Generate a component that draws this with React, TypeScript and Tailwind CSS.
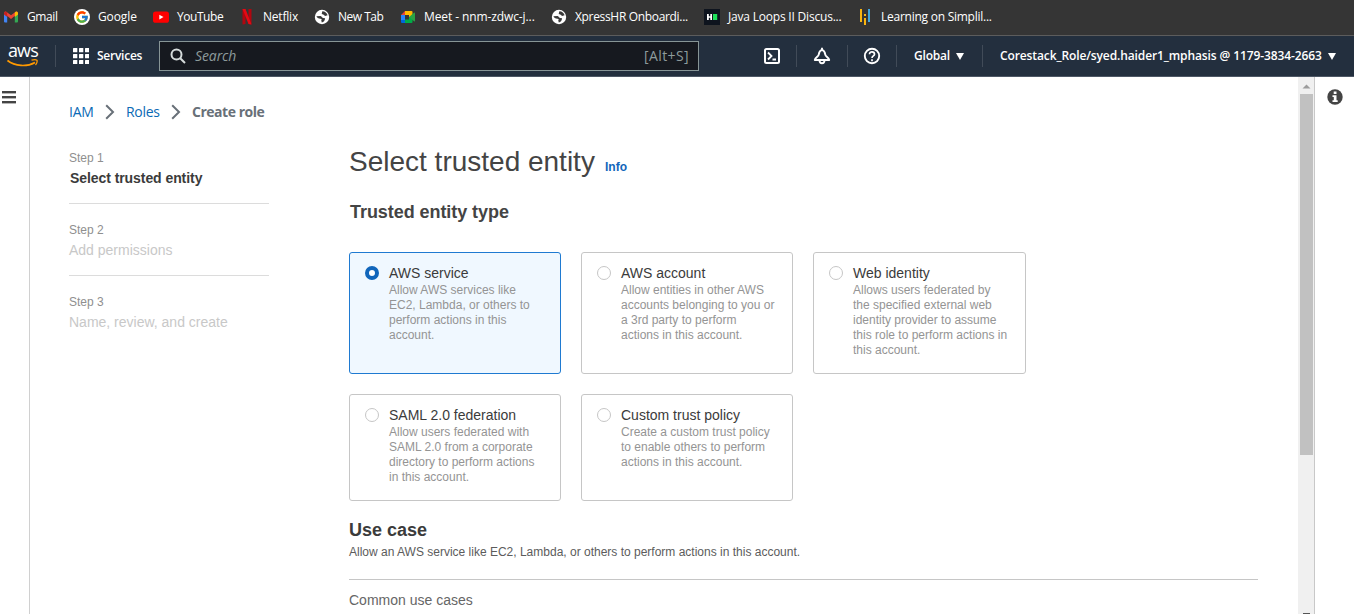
import React from "react";
import { FcGoogle } from "react-icons/fc";

const Globe = () => (
  <svg width="16" height="16" viewBox="0 0 16 16">
    <circle cx="8" cy="8" r="7.2" fill="#fff" />
    <path d="M2.4 7.2l4-.2c1.5 0 1.2 1.8 2.7 1.9l2 .3c-.3 2.5-1.500 4-3.300 4.300l-.6-2.200c.900-.500.600-1.500-.700-1.600-2.200-.200-3.500-.800-4.100-2.500z" fill="#3a3a3a" />
    <path d="M8.300 2.200c2.800.100 4.700 1.700 5.300 4.100l-2.500.700-1.800-1.500-1.600-.600z" fill="#3a3a3a" />
  </svg>
);

const Gmail = () => (
  <svg width="16" height="16" viewBox="0 0 16 16">
    <path d="M1 4v8.500q0 1 1 1h2.200V6.800z" fill="#4285f4" />
    <path d="M15 4v8.500q0 1-1 1h-2.200V6.800z" fill="#34a853" />
    <path d="M1 4.200Q1.200 2 3.300 2.700L8 6.200l4.700-3.500Q14.800 2 15 4.200L8 10z" fill="#ea4335" />
    <path d="M11.800 3.400l.9-.7Q14.800 2 15 4.200v1.300l-3.200 2.400z" fill="#fbbc04" />
    <path d="M1 4.200v1.300l3.200 2.400V3.400l-.9-.7Q1.200 2 1 4.200z" fill="#c5221f" />
  </svg>
);

const Google = () => (
  <span className="flex h-4 w-4 items-center justify-center rounded-full bg-white">
    <FcGoogle size={14} />
  </span>
);

const YouTube = () => (
  <svg width="16" height="16" viewBox="0 0 16 16">
    <rect x="0" y="2.500" width="16" height="11.300" rx="2.600" fill="#f00" />
    <path d="M6.300 5.700v4.800l4.200-2.400z" fill="#fff" />
  </svg>
);

const Netflix = () => (
  <svg width="16" height="16" viewBox="0 0 16 16">
    <path d="M3.500 0h3v15l-3 .600z" fill="#b1060f" />
    <path d="M9.500 0h3v15.600l-3-.600z" fill="#b1060f" />
    <path d="M3.500 0h3l6 15.600-3-.500z" fill="#e50914" />
  </svg>
);

const Meet = () => (
  <svg width="16" height="16" viewBox="0 0 16 16">
    <path d="M1 6l4-4v4z" fill="#ea4335" />
    <path d="M1 6h4v5H1z" fill="#2684fc" />
    <path d="M1 11h4v3H2q-1 0-1-1z" fill="#0066da" />
    <path d="M5 2h6.500q1 0 1 1v3.500L9 8.500V6H5z" fill="#ffba00" />
    <path d="M5 10.500h4V7.800l3.500 2V13q0 1-1 1H5z" fill="#00ac47" />
    <path d="M9 8l5-4.200q1-.600 1 .400v7.600q0 1-1 .400z" fill="#2aa243" />
  </svg>
);

const HackerRank = () => (
  <svg width="16" height="16" viewBox="0 0 16 16">
    <rect width="16" height="16" fill="#0e141e" />
    <path d="M3 5h1.800v2.200h1.500V5H8v6H6.300V8.700H4.800V11H3z" fill="#fff" />
    <rect x="9" y="5" width="4.200" height="6" fill="#1ee05b" />
  </svg>
);

const Simplilearn = () => (
  <svg width="16" height="16" viewBox="0 0 16 16">
    <rect x="3" y="0" width="2" height="13" fill="#f8b511" />
    <rect x="7" y="5" width="2" height="2" fill="#f8b511" />
    <rect x="7" y="9" width="2" height="7" fill="#f8b511" />
    <rect x="11" y="0" width="2" height="13" fill="#3ea6de" />
  </svg>
);

const bookmarks = [
  { label: "Gmail", icon: <Gmail />, cls: "w-[71px]", text: "tracking-[-0.4px]" },
  { label: "Google", icon: <Google />, cls: "w-[79px]", text: "tracking-[-0.1px]" },
  { label: "YouTube", icon: <YouTube />, cls: "w-[86px]", text: "tracking-[-0.45px]" },
  { label: "Netflix", icon: <Netflix />, cls: "w-[75px]", text: "tracking-[-0.2px]" },
  { label: "New Tab", icon: <Globe />, cls: "w-[86px]", text: "tracking-[-0.5px]" },
  { label: "Meet - nnm-zdwc-j...", icon: <Meet />, cls: "w-[151px]", text: "tracking-[-0.1px]" },
  { label: "XpressHR Onboardi...", icon: <Globe />, cls: "w-[153px]", text: "tracking-[-0.33px]" },
  { label: "Java Loops II Discus...", icon: <HackerRank />, cls: "w-[153px]", text: "tracking-[-0.2px]" },
  { label: "Learning on Simplil...", icon: <Simplilearn />, cls: "w-[150px]", text: "tracking-[-0.25px]" },
];

const steps = [
  { n: "Step 1", label: "Select trusted entity", cls: "font-bold text-[#3b3b3b] pl-px tracking-[-0.07px]" },
  { n: "Step 2", label: "Add permissions", cls: "text-[#c8c8c8]" },
  { n: "Step 3", label: "Name, review, and create", cls: "text-[#c8c8c8]" },
];

const entities = [
  { title: "AWS service", lines: ["Allow AWS services like", "EC2, Lambda, or others to", "perform actions in this", "account."], on: true },
  { title: "AWS account", lines: ["Allow entities in other AWS", "accounts belonging to you or", "a 3rd party to perform", "actions in this account."] },
  { title: "Web identity", lines: ["Allows users federated by", "the specified external web", "identity provider to assume", "this role to perform actions in", "this account."] },
  { title: "SAML 2.0 federation", lines: ["Allow users federated with", "SAML 2.0 from a corporate", "directory to perform actions", "in this account."] },
  { title: "Custom trust policy", lines: ["Create a custom trust policy", "to enable others to perform", "actions in this account."] },
];

const Divider = () => <span className="h-[22px] w-px shrink-0 bg-[#414b58]" />;
const Caret = () => (
  <svg width="8" height="7" viewBox="0 0 8 7" className="shrink-0">
    <path d="M0 0h8L4 7z" fill="#fff" />
  </svg>
);
const Chevron = () => (
  <svg width="10" height="16" viewBox="0 0 10 16" fill="none" stroke="#687078" strokeWidth="2" className="shrink-0">
    <path d="M1.200 1.200L8 8l-6.800 6.800" />
  </svg>
);

function BookmarkBar() {
  return (
    <div className="flex h-9 shrink-0 items-center border-b border-[#5c5c5c] bg-[#353535] pb-[2px] pl-[3px] font-['Open_Sans',sans-serif] text-[12px] text-white">
      {bookmarks.map((b) => (
        <div key={b.label} className={`flex shrink-0 items-center gap-2 ${b.cls}`}>
          {b.icon}
          <span className={`whitespace-nowrap ${b.text}`}>{b.label}</span>
        </div>
      ))}
    </div>
  );
}

function NavBar() {
  return (
    <div className="flex h-[41px] shrink-0 items-center border-b border-[#4d5765] bg-[#232f3e] font-['Open_Sans',sans-serif] text-[12px] font-semibold text-white">
      <div className="flex w-[55px] flex-col items-start pb-[2px] pl-[7px]">
        <span className="h-[16px] pl-px text-[18px] leading-[14px] font-medium tracking-[-0.9px]">aws</span>
        <svg width="32" height="8" viewBox="0 0 32 8" fill="none" stroke="#f90" strokeWidth="1.700">
          <path d="M.500 1.500C8 7.600 20 8 28 3.400" />
          <path d="M24.500 1.200c2.500-.700 4.500-.600 5.500 0 .400 1.500-.200 3.300-1.500 4.800" strokeWidth="1.300" />
        </svg>
      </div>
      <Divider />
      <svg width="16" height="16" viewBox="0 0 16 16" className="ml-[17px]" fill="#fff">
        {[0, 6, 12].map((y) => [0, 6, 12].map((x) => <rect key={`${x}-${y}`} x={x} y={y} width="4.300" height="4.300" rx=".500" />))}
      </svg>
      <span className="ml-2 w-[62px] tracking-[-0.25px]">Services</span>
      <div className="flex h-[30px] w-[540px] items-center border border-[#879596] bg-[#16191f] px-[9px] text-[14px] font-normal text-[#8d9b9c]">
        <svg width="18" height="18" viewBox="0 0 18 18" fill="none" stroke="#d5dbdb" strokeWidth="2">
          <circle cx="7.500" cy="7.500" r="5" />
          <path d="M11.200 11.200l4.800 4.800" />
        </svg>
        <span className="ml-2 grow pb-[2px] tracking-[-0.1px] italic">Search</span>
        <span className="pb-[2px] tracking-[0.4px]">[Alt+S]</span>
      </div>
      <svg width="18" height="18" viewBox="0 0 18 18" fill="none" stroke="#fff" strokeWidth="2" className="ml-[64px]">
        <rect x="2" y="2" width="14" height="14" rx="1.500" />
        <path d="M5 5.500L8.500 9 5 12.500M9.500 12.500H13" strokeWidth="1.800" />
      </svg>
      <span className="w-[15px]" />
      <Divider />
      <svg width="18" height="18" viewBox="0 0 18 18" fill="none" stroke="#fff" strokeWidth="1.900" className="ml-4" strokeLinejoin="round">
        <path d="M9 2.800C6.800 3.500 6 5 5.800 7.300c-.200 2.200-3.500 3.200-4 5.700h14.400c-.500-2.500-3.800-3.500-4-5.700C12 5 11.200 3.500 9 2.800z" />
        <path d="M6.500 13.500c.200 3.700 4.800 3.700 5 0" />
        <path d="M9 .800V3" />
      </svg>
      <span className="w-4" />
      <Divider />
      <svg width="18" height="18" viewBox="0 0 18 18" fill="none" stroke="#fff" strokeWidth="1.900" className="ml-[15px]">
        <circle cx="9" cy="9" r="7.200" />
        <path d="M6.500 7.200c0-3.200 5-3 5 0C11.500 9 9 8.800 9 11M9 12.300v1.900" strokeWidth="1.700" />
      </svg>
      <span className="w-[15px]" />
      <Divider />
      <span className="ml-[17px] w-[42px] whitespace-nowrap tracking-[-0.2px]">Global</span>
      <Caret />
      <span className="w-[18px]" />
      <Divider />
      <span className="ml-[17px] w-[328px] whitespace-nowrap tracking-[-0.11px]">Corestack_Role/syed.haider1_mphasis @ 1179-3834-2663</span>
      <Caret />
    </div>
  );
}

function Sidebar() {
  return (
    <div className="w-[200px] shrink-0 pt-[6px]">
      {steps.map((s, i) => (
        <div key={s.n} className={`h-[72px] pt-[18px] ${i < 2 ? "border-b border-[#dcdcdc]" : ""}`}>
          <div className="text-[12px] leading-4 text-[#8f8f8f]">{s.n}</div>
          <div className={`mt-px text-[14px] leading-[22px] ${s.cls}`}>{s.label}</div>
        </div>
      ))}
    </div>
  );
}

function EntityCard({ e }: { e: (typeof entities)[number] }) {
  return (
    <div className={`flex rounded-[3px] border pt-3 pl-[15px] ${e.on ? "border-[#1f7ad1] bg-[#f0f8ff]" : "border-[#c6c6c6] bg-white"}`}>
      <span className={`mt-px h-[14px] w-[14px] shrink-0 rounded-full bg-white ${e.on ? "border-4 border-[#1166bb]" : "border border-[#c6c6c6]"}`} />
      <div className="ml-[10px]">
        <div className="mb-[2px] text-[14px] leading-4 whitespace-nowrap text-[#3b3b3b]">{e.title}</div>
        {e.lines.map((l) => (
          <div key={l} className="text-[12px] leading-[15px] whitespace-nowrap text-[#949494]">{l}</div>
        ))}
      </div>
    </div>
  );
}

export default function App() {
  return (
    <div className="flex h-[614px] w-[1354px] flex-col overflow-hidden bg-white font-['Liberation_Sans',Arial,sans-serif]">
      <BookmarkBar />
      <NavBar />
      <div className="flex min-h-0 grow">
        <div className="w-[30px] shrink-0 border-r border-[#d0d0d0] pt-[14px] pl-[2px]">
          <svg width="14" height="13" viewBox="0 0 14 13" fill="#444">
            <rect y="0" width="14" height="2.400" />
            <rect y="5" width="14" height="2.400" />
            <rect y="10" width="14" height="2.400" />
          </svg>
        </div>
        <main className="grow overflow-hidden pl-[39px]">
          <div className="flex h-[49px] items-center pt-[21px] font-['Open_Sans',sans-serif] text-[14px] text-[#0b6ab5]">
            <span className="w-[36px] pb-[2px] tracking-[-0.2px]">IAM</span>
            <Chevron />
            <span className="ml-[11px] w-[45px] pb-[2px] tracking-[-0.3px]">Roles</span>
            <Chevron />
            <span className="ml-[11px] pb-[2px] font-bold tracking-[-0.48px] text-[#687078]">Create role</span>
          </div>
          <div className="flex">
            <Sidebar />
            <div className="ml-20 w-[909px] shrink-0 pt-[18px]">
              <div className="flex items-baseline">
                <h1 className="w-[256px] text-[28px] leading-9 whitespace-nowrap text-[#444]">Select trusted entity</h1>
                <span className="text-[12px] font-bold text-[#1166bb]">Info</span>
              </div>
              <h2 className="mt-[20px] pl-px text-[18px] leading-6 font-bold tracking-[-0.06px] text-[#444]">Trusted entity type</h2>
              <div className="mt-[28px] grid w-[677px] grid-cols-[212px_212px_213px] grid-rows-[122px_107px] gap-5">
                {entities.map((e) => (
                  <EntityCard key={e.title} e={e} />
                ))}
              </div>
              <h2 className="mt-[17px] text-[18px] leading-6 font-bold text-[#3b3b3b]">Use case</h2>
              <p className="mt-[2px] text-[12px] leading-4 text-[#5c5c5c]">
                Allow an AWS service like EC2, Lambda, or others to perform actions in this account.
              </p>
              <div className="mt-[19px] border-t border-[#c6c6c6] pt-[10px] text-[14px] leading-5 text-[#666]">Common use cases</div>
            </div>
          </div>
        </main>
        <div className="flex w-4 shrink-0 flex-col items-center bg-[#f0f0f0]">
          <svg width="16" height="17" viewBox="0 0 16 17">
            <path d="M4.500 11.500h8L8.500 7.500z" fill="#9c9c9c" />
          </svg>
          <div className="ml-px h-[361px] w-[13px] bg-[#c1c1c1]" />
          <div className="mt-auto h-px w-[7px] bg-[#555]" />
        </div>
        <div className="w-10 shrink-0 border-l border-[#c8c8c8] pt-[12px] pl-[12px]">
          <svg width="16" height="16" viewBox="0 0 16 16">
            <circle cx="8" cy="8" r="7.700" fill="#444" />
            <path d="M6.700 2.500h2.800v2.600H6.700zM5.500 6.300h4v4.900h1.200V13H5.500v-1.800h1.300V8.100H5.500z" fill="#fff" />
          </svg>
        </div>
      </div>
    </div>
  );
}
